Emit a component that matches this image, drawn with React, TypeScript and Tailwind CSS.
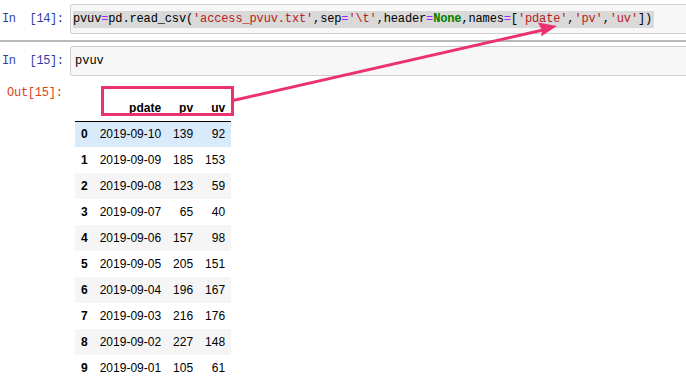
import React from "react";

const mono = { fontFamily: '"Liberation Mono", "DejaVu Sans Mono", monospace' };

function Code() {
  const P = "text-[#aa22ff]";
  const S = "text-[#ba2121]";
  return (
    <span className="bg-[#d9d9d9] leading-[17px] inline-block tracking-[-0.14px] pr-[2px]">
      <span>pvuv</span>
      <span className={P}>=</span>
      <span>pd.read_csv(</span>
      <span className={S}>'access_pvuv.txt'</span>
      <span>,sep</span>
      <span className={P}>=</span>
      <span className={S}>'\t'</span>
      <span>,header</span>
      <span className={P}>=</span>
      <span className="text-[#008000] font-bold">None</span>
      <span>,names</span>
      <span className={P}>=</span>
      <span>[</span>
      <span className={S}>'pdate'</span>
      <span>,</span>
      <span className={S}>'pv'</span>
      <span>,</span>
      <span className={S}>'uv'</span>
      <span>])</span>
    </span>
  );
}

const rows: [string, string, string, string][] = [
  ["0", "2019-09-10", "139", "92"],
  ["1", "2019-09-09", "185", "153"],
  ["2", "2019-09-08", "123", "59"],
  ["3", "2019-09-07", "65", "40"],
  ["4", "2019-09-06", "157", "98"],
  ["5", "2019-09-05", "205", "151"],
  ["6", "2019-09-04", "196", "167"],
  ["7", "2019-09-03", "216", "176"],
  ["8", "2019-09-02", "227", "148"],
  ["9", "2019-09-01", "105", "61"],
];

export default function App() {
  return (
    <div className="relative w-[686px] h-[382px] overflow-hidden bg-white pt-[4px]">
      {/* Cell 14 */}
      <div className="flex items-stretch h-[30px]">
        <div className="w-[70px] shrink-0 flex items-center text-[12px] text-[#303f9f] tracking-[-0.4px]" style={mono}>
          <span className="ml-[2px]">In</span>
          <span className="ml-[14px]">[14]:</span>
        </div>
        <div className="flex-1 -mr-[20px] border border-[#cfcfcf] bg-[#f7f7f7] rounded-[2px] flex items-center pl-[2px] text-[12px] text-black whitespace-nowrap" style={mono}>
          <Code />
        </div>
      </div>
      {/* separator */}
      <div className="mt-[6px] h-[2px] bg-[#b9b9b9]" />
      {/* Cell 15 */}
      <div className="mt-[4px] flex items-stretch h-[30px]">
        <div className="w-[70px] shrink-0 flex items-center text-[12px] text-[#303f9f] tracking-[-0.4px]" style={mono}>
          <span className="ml-[2px]">In</span>
          <span className="ml-[14px]">[15]:</span>
        </div>
        <div className="flex-1 -mr-[20px] border border-[#cfcfcf] bg-[#f7f7f7] rounded-[2px] flex items-center pl-[4px] text-[12px] text-black" style={mono}>
          pvuv
        </div>
      </div>
      {/* Output */}
      <div className="flex pt-[10px]">
        <div className="w-[70px] shrink-0 pl-[7px] text-[12px] leading-[14px] text-[#d84315] tracking-[-0.25px]" style={mono}>
          Out[15]:
        </div>
        <div className="pl-[5px]">
          <table
            className="border-collapse text-[12px] leading-[14px] text-black"
            style={{ fontFamily: '"Liberation Sans", Arial, sans-serif' }}
          >
            <thead>
              <tr className="h-[35px] border-b border-black">
                <th className="px-[6px] pb-[6px] align-bottom text-right font-bold"></th>
                <th className="px-[6px] pb-[6px] align-bottom text-right font-bold">pdate</th>
                <th className="px-[6px] pb-[6px] align-bottom text-right font-bold">pv</th>
                <th className="px-[6px] pb-[6px] align-bottom text-right font-bold">uv</th>
              </tr>
            </thead>
            <tbody>
              {rows.map((r, i) => (
                <tr
                  key={r[0]}
                  className={
                    "h-[26px] " +
                    (i === 0 ? "bg-[#d9ebfa]" : i % 2 === 0 ? "bg-[#f5f5f5]" : "bg-white")
                  }
                >
                  <th className="px-[6px] text-right font-bold align-middle">{r[0]}</th>
                  <td className="px-[6px] text-right align-middle whitespace-nowrap">{r[1]}</td>
                  <td className="px-[6px] text-right align-middle min-w-[32px]">{r[2]}</td>
                  <td className="px-[6px] text-right align-middle min-w-[32px]">{r[3]}</td>
                </tr>
              ))}
            </tbody>
          </table>
        </div>
      </div>
      {/* Annotation overlay */}
      <div className="absolute left-[101px] top-[86px] w-[133px] h-[30px] border-[3px] border-[#ea336e]" />
      <svg className="absolute left-0 top-0 pointer-events-none" width="686" height="382">
        <line x1="233" y1="100.5" x2="543" y2="30" stroke="#ea336e" strokeWidth="3" />
        <polygon points="557,26 538,22.5 542,30.5 541,36.5" fill="#ea336e" />
      </svg>
    </div>
  );
}
